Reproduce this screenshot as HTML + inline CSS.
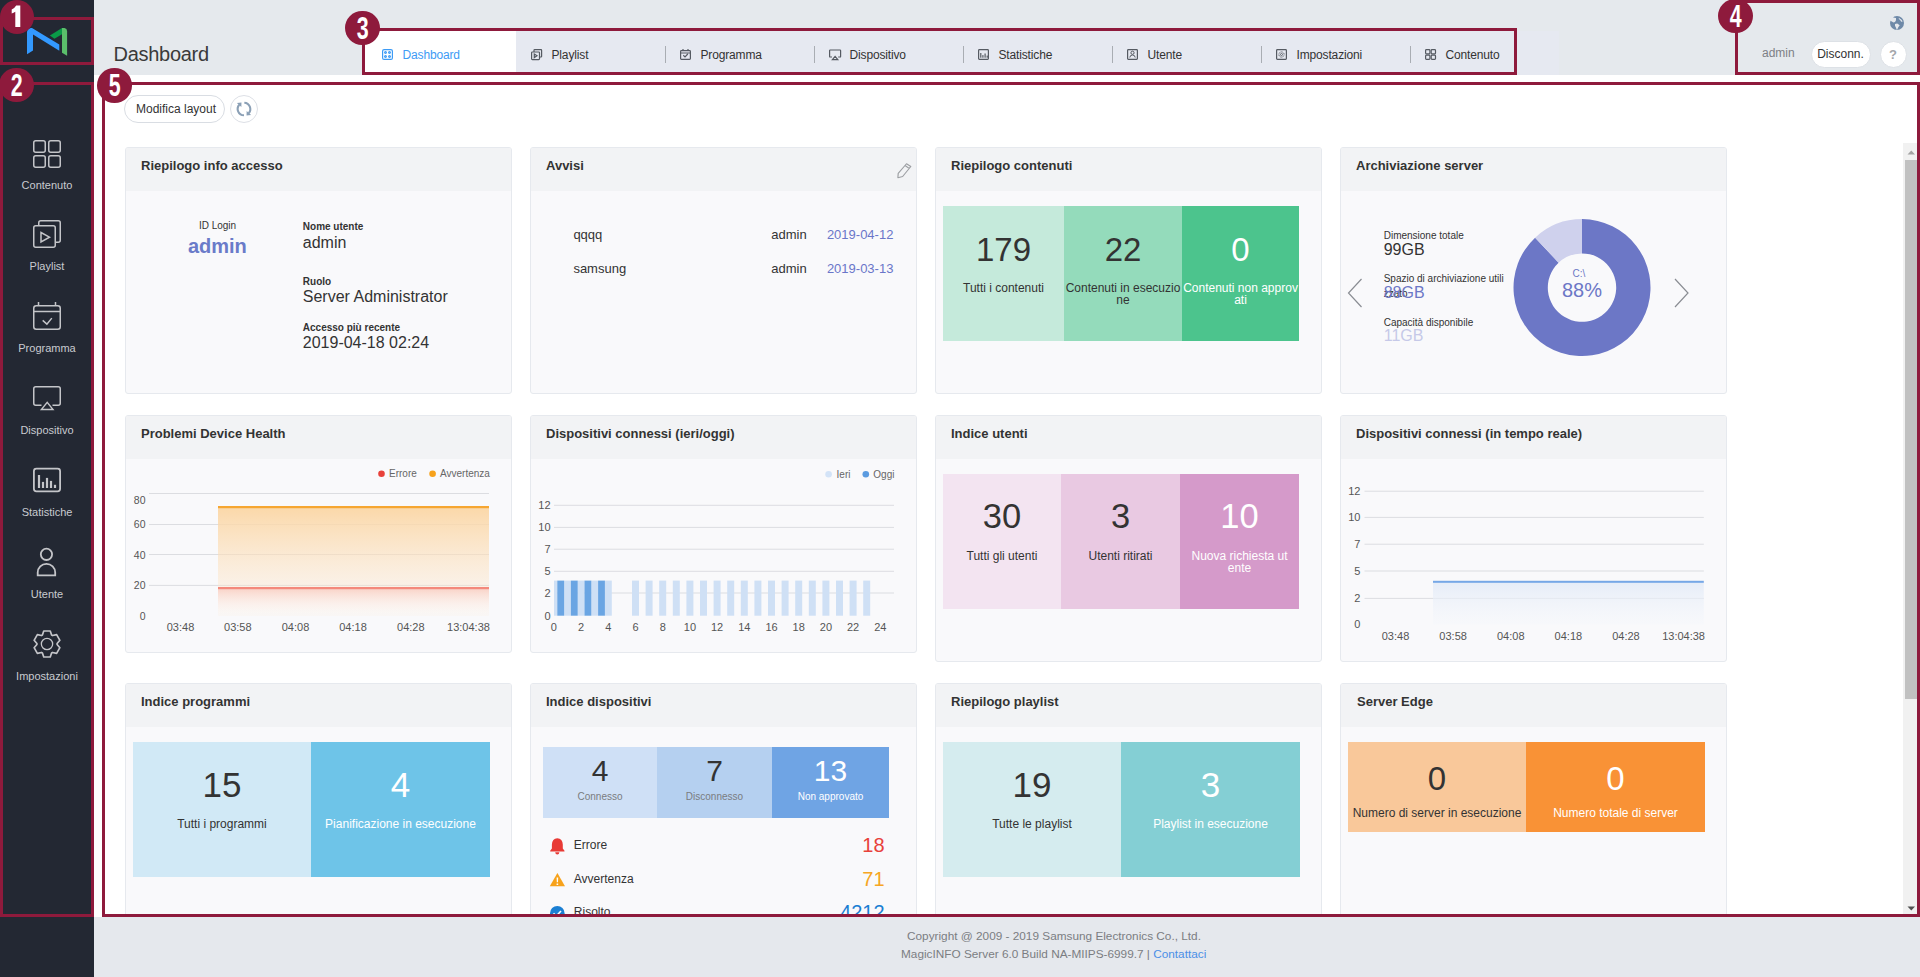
<!DOCTYPE html>
<html><head><meta charset="utf-8">
<style>
*{box-sizing:border-box;margin:0;padding:0}
html,body{width:1920px;height:977px;overflow:hidden;background:#e5e8ed;font-family:"Liberation Sans",sans-serif;color:#333}
.abs{position:absolute}
#side{position:absolute;left:0;top:0;width:94px;height:977px;background:#232833}
#hdr{position:absolute;left:94px;top:0;width:1826px;height:75px;background:#e5e9ed}
#main{position:absolute;left:94px;top:75px;width:1826px;height:842px;background:#fff}
#foot{position:absolute;left:94px;top:917px;width:1826px;height:60px;background:#e5e8ed}
.sitem{position:absolute;left:0;width:94px;height:12px;text-align:center;color:#c9cbd0;font-size:11px;line-height:11px}
.sitem svg{position:absolute;left:33px;top:0}
.sitem span{position:absolute;left:0;width:94px;text-align:center;white-space:nowrap}
.tab{position:absolute;top:31px;height:41px;width:149px;font-size:12px;color:#333}
.tab svg{position:absolute;left:15px;top:18px}
.tab span{position:absolute;left:35px;top:18px;line-height:12px;letter-spacing:-0.15px;white-space:nowrap}
.sep{position:absolute;top:46px;width:1px;height:17px;background:#a9adb3}
.card{position:absolute;width:387px;background:#f9f9fb;border:1px solid #e6e9ee;border-radius:3px;overflow:hidden}
.card .ch{position:absolute;left:0;top:0;width:100%;height:43px;background:#f2f3f5}
.card .ct{position:absolute;left:15px;top:10px;font-size:13px;font-weight:bold;color:#333;white-space:nowrap}
.ann{position:absolute;border:3px solid #8e1a3c}
.num{position:absolute;width:34.5px;height:34.5px;border-radius:50%;background:#8e1a3c;color:#fff;font-weight:bold;font-size:31px;text-align:center;line-height:35.5px}
.num b{display:inline-block;transform:scaleX(0.69)}
.tile{position:absolute;text-align:center}
.tile .n{position:absolute;left:0;width:100%;font-size:32px}
.tile .l{position:absolute;left:0;width:100%;font-size:12px;line-height:12px;word-break:break-all}
</style></head>
<body>
<div id="side">
<svg class="abs" style="left:0;top:0" width="94" height="977" viewBox="0 0 94 977">
<g>
<path d="M27 54.2 V32.8 C27 29.8 29.2 28 32 28 L59.3 44.6 V50.7 L33 34.6 V50.5 Z" fill="#3399ff"/>
<path d="M49.9 35.6 L62 28 V34.3 L54.4 38.8 Z" fill="#0a9a48"/>
<path d="M62 28 H64.5 Q67.1 28.5 67.1 31 V55.8 L62 52.8 Z" fill="#5bbf6b"/>
</g>
<g fill="none" stroke="#c4c5c9" stroke-width="1.5">
<rect x="33.75" y="140.75" width="11.5" height="11.5" rx="2"/>
<rect x="48.75" y="140.75" width="11.5" height="11.5" rx="2"/>
<rect x="33.75" y="155.75" width="11.5" height="11.5" rx="2"/>
<rect x="48.75" y="155.75" width="11.5" height="11.5" rx="2"/>
<path d="M38.75 225.3 V222.75 Q38.75 220.75 40.75 220.75 H58.25 Q60.25 220.75 60.25 222.75 V240.25 Q60.25 242.25 58.25 242.25 H55.8"/>
<rect x="33.75" y="225.75" width="21.5" height="21.5" rx="2"/>
<path d="M41 232.5 L49.5 237.2 L41 242 Z"/>
<rect x="33.75" y="305.75" width="26.5" height="23.5" rx="2.5"/>
<path d="M33.75 311.5 H60.25 M38.5 302 V306 M55.5 302 V306"/>
<path d="M42.7 320.4 L46.9 324.1 L51.8 318.1"/>
<path d="M41.5 405.25 H35.75 Q33.75 405.25 33.75 403.25 V388.75 Q33.75 386.75 35.75 386.75 H58.25 Q60.25 386.75 60.25 388.75 V403.25 Q60.25 405.25 58.25 405.25 H52.5"/>
<path d="M41.5 409.4 L47.2 402.4 L52.9 409.4 Z"/>
<rect x="33.9" y="468.7" width="26.2" height="22.6" rx="2.5" stroke-width="1.8"/>
<circle cx="46.45" cy="554.35" r="5.65" stroke-width="1.8"/>
<path d="M37.7 575.3 V572.55 A8.75 8.75 0 0 1 55.2 572.55 V575.3 Z" stroke-width="1.8"/>
<path d="M42.41 635.00 L43.76 631.00 L50.24 631.00 L51.59 635.00 L52.50 635.53 L56.64 634.69 L59.88 640.31 L57.09 643.47 L57.09 644.53 L59.88 647.69 L56.64 653.31 L52.50 652.47 L51.59 653.00 L50.24 657.00 L43.76 657.00 L42.41 653.00 L41.50 652.47 L37.36 653.31 L34.12 647.69 L36.91 644.53 L36.91 643.47 L34.12 640.31 L37.36 634.69 L41.50 635.53 Z" stroke-width="1.7" stroke-linejoin="round"/>
<circle cx="47" cy="644" r="5.65" stroke-width="1.3"/>
</g>
<g fill="#c4c5c9">
<rect x="37.9" y="475" width="2.2" height="13"/>
<rect x="41.9" y="481.9" width="2.2" height="6.1"/>
<rect x="45.9" y="477.9" width="2.2" height="10.1"/>
<rect x="49.9" y="480.9" width="2.2" height="7.1"/>
<rect x="53.9" y="484.8" width="2.2" height="3.2"/>
</g>
</svg>
<div class="sitem" style="top:179.5px"><span>Contenuto</span></div>
<div class="sitem" style="top:261.3px"><span>Playlist</span></div>
<div class="sitem" style="top:343.3px"><span>Programma</span></div>
<div class="sitem" style="top:425.2px"><span>Dispositivo</span></div>
<div class="sitem" style="top:507.2px"><span>Statistiche</span></div>
<div class="sitem" style="top:589.1px"><span>Utente</span></div>
<div class="sitem" style="top:671.0px"><span>Impostazioni</span></div>
</div>
<div id="hdr"></div>
<div class="abs" style="left:113.6px;top:43.6px;font-size:20px;line-height:20px;letter-spacing:-0.3px;color:#3a3a3a;white-space:nowrap">Dashboard</div>
<div class="abs" style="left:365px;top:31px;width:1194px;height:44px;background:#e6e9f1"></div>
<div class="abs" style="left:365px;top:31px;width:151px;height:41px;background:#fff"></div>
<svg class="abs" style="left:360px;top:40px" width="1160" height="30" viewBox="360 40 1160 30">
<g fill="none" stroke-width="1.2">
<rect x="382.6" y="49.6" width="9.8" height="9.8" rx="1.5" stroke="#3d9bf5"/>
<circle cx="385.5" cy="52.5" r="0.9" stroke="#3d9bf5"/>
<circle cx="389.5" cy="52.5" r="0.9" stroke="#3d9bf5"/>
<circle cx="385.5" cy="56.5" r="0.9" stroke="#3d9bf5"/>
<circle cx="389.5" cy="56.5" r="0.9" stroke="#3d9bf5"/>
<g stroke="#555a62">
<path d="M534 52 V50.3 Q534 49.6 534.7 49.6 H541 Q541.6 49.6 541.6 50.3 V56.5 Q541.6 57 541 57 H539.5"/>
<rect x="531.6" y="52" width="7.9" height="7.6" rx="0.8"/>
<path d="M534.3 54 L537 55.8 L534.3 57.6 Z"/>
<rect x="680.6" y="50.6" width="9.8" height="8.8" rx="0.8"/>
<path d="M680.6 53 H690.4 M683 49 V51 M688 49 V51 M683.3 55.3 L685 56.9 L687.8 54"/>
<path d="M832 57 H830.2 Q829.6 57 829.6 56.4 V50.6 Q829.6 50 830.2 50 H840 Q840.6 50 840.6 50.6 V56.4 Q840.6 57 840 57 H838.2"/>
<path d="M832.4 59.6 L835.1 56.4 L837.8 59.6 Z"/>
<rect x="978.6" y="49.6" width="9.8" height="9.8" rx="0.8"/>
</g><g fill="#555a62" stroke="none"><rect x="980.2" y="53" width="1.2" height="4.7"/><rect x="982.3" y="55.1" width="1.2" height="2.6"/><rect x="984.5" y="53.5" width="1.2" height="4.2"/><rect x="986.6" y="55.6" width="1.2" height="2.1"/></g><g stroke="#555a62">
<rect x="1127.6" y="49.6" width="9.8" height="9.8" rx="0.8"/>
<circle cx="1132.5" cy="52.8" r="1.6" stroke-width="1"/>
<path d="M1129.8 57.5 Q1130 55 1132.5 55 Q1135 55 1135.2 57.5" stroke-width="1"/>
<rect x="1276.6" y="49.6" width="9.8" height="9.8" rx="0.8"/>
<circle cx="1281.5" cy="54.5" r="2.6" stroke-width="1" stroke-dasharray="1 0.6"/>
<circle cx="1281.5" cy="54.5" r="1" stroke-width="0.9"/>
<rect x="1425.6" y="49.6" width="4.3" height="4.3" rx="0.8"/>
<rect x="1431.2" y="49.6" width="4.3" height="4.3" rx="0.8"/>
<rect x="1425.6" y="55.1" width="4.3" height="4.3" rx="0.8"/>
<rect x="1431.2" y="55.1" width="4.3" height="4.3" rx="0.8"/>
</g>
</g>
</svg>
<div class="tab" style="left:367.5px"><span style="color:#3d9bf5">Dashboard</span></div>
<div class="tab" style="left:516.5px"><span>Playlist</span></div>
<div class="sep" style="left:665px"></div>
<div class="tab" style="left:665.5px"><span>Programma</span></div>
<div class="sep" style="left:814px"></div>
<div class="tab" style="left:814.5px"><span>Dispositivo</span></div>
<div class="sep" style="left:963px"></div>
<div class="tab" style="left:963.5px"><span>Statistiche</span></div>
<div class="sep" style="left:1112px"></div>
<div class="tab" style="left:1112.5px"><span>Utente</span></div>
<div class="sep" style="left:1261px"></div>
<div class="tab" style="left:1261.5px"><span>Impostazioni</span></div>
<div class="sep" style="left:1410px"></div>
<div class="tab" style="left:1410.5px"><span>Contenuto</span></div>
<svg class="abs" style="left:1888px;top:14px" width="18" height="18" viewBox="1888 14 18 18">
<circle cx="1897" cy="23" r="7" fill="#6e89a8"/>
<path d="M1889.6 20.2 L1893.5 22.4 L1895 22.1 L1896 20.3 L1896 18.1 L1893.2 17.5 L1893.4 16.3 L1890 17 Z" fill="#e5e8ed"/>
<path d="M1899 18.1 L1901.5 19.7 L1902.7 21.5 L1901.2 21.8 L1900.3 20.3 L1898.7 18.7 Z" fill="#e5e8ed"/>
<path d="M1895 24 L1897.2 23.4 L1899.7 25.2 L1898.4 27 L1896.9 30.2 L1896 27.7 L1895 25.8 Z" fill="#e5e8ed"/>
</svg>
<div class="abs" style="left:1762px;top:46.5px;font-size:12px;line-height:12px;color:#7d7f85">admin</div>
<div class="abs" style="left:1810.5px;top:40.5px;width:60px;height:27px;border-radius:13.5px;background:#fff;border:1px solid #dde1e6;font-size:12px;line-height:25px;text-align:center;color:#333">Disconn.</div>
<div class="abs" style="left:1879.5px;top:40.5px;width:27px;height:27px;border-radius:13.5px;background:#fff;border:1px solid #dde1e6;font-size:13px;font-weight:bold;line-height:25px;text-align:center;color:#a3a6ab">?</div>
<div id="main"></div>
<div class="abs" style="left:124px;top:95px;width:101px;height:28px;border-radius:14px;border:1px solid #d9dde3;background:#fff;font-size:12px;line-height:26px;color:#333;padding-left:11px;white-space:nowrap">Modifica layout</div>
<div class="abs" style="left:230px;top:95px;width:28px;height:28px;border-radius:14px;border:1px solid #dde0e6;background:#fff"></div>
<svg class="abs" style="left:230px;top:95px" width="28" height="28" viewBox="230 95 28 28">
<g fill="none" stroke="#8ba0b6" stroke-width="2.1">
<path d="M244.00 115.30 A6.3 6.3 0 0 1 239.32 104.78"/>
<path d="M244.33 102.71 A6.3 6.3 0 0 1 248.68 113.22"/>
</g>
<path d="M241.46 102.41 L236.89 103.00 L241.35 107.01 Z M246.54 115.59 L251.11 115.00 L246.65 110.99 Z" fill="#8ba0b6"/>
</svg>
<div class="abs" id="clip" style="left:94px;top:143px;width:1809px;height:774px;overflow:hidden"><div class="abs" style="left:-94px;top:-143px;width:1920px;height:977px">
<div class="card" style="left:125px;top:147px;height:247px"><div class="ch"></div><div class="ct" style="left:15px">Riepilogo info accesso</div></div>
<div class="card" style="left:530px;top:147px;height:247px"><div class="ch"></div><div class="ct" style="left:15px">Avvisi</div></div>
<div class="card" style="left:935px;top:147px;height:247px"><div class="ch"></div><div class="ct" style="left:15px">Riepilogo contenuti</div></div>
<div class="card" style="left:1340px;top:147px;height:247px"><div class="ch"></div><div class="ct" style="left:15px">Archiviazione server</div></div>
<div class="card" style="left:125px;top:415px;height:238px"><div class="ch"></div><div class="ct" style="left:15px">Problemi Device Health</div></div>
<div class="card" style="left:530px;top:415px;height:238px"><div class="ch"></div><div class="ct" style="left:15px">Dispositivi connessi (ieri/oggi)</div></div>
<div class="card" style="left:935px;top:415px;height:247px"><div class="ch"></div><div class="ct" style="left:15px">Indice utenti</div></div>
<div class="card" style="left:1340px;top:415px;height:247px"><div class="ch"></div><div class="ct" style="left:15px">Dispositivi connessi (in tempo reale)</div></div>
<div class="card" style="left:125px;top:683px;height:300px"><div class="ch"></div><div class="ct" style="left:15px">Indice programmi</div></div>
<div class="card" style="left:530px;top:683px;height:300px"><div class="ch"></div><div class="ct" style="left:15px">Indice dispositivi</div></div>
<div class="card" style="left:935px;top:683px;height:300px"><div class="ch"></div><div class="ct" style="left:15px">Riepilogo playlist</div></div>
<div class="card" style="left:1340px;top:683px;height:300px"><div class="ch"></div><div class="ct" style="left:16px">Server Edge</div></div>
<div class="abs" style="left:117.5px;width:200px;text-align:center;top:220.7px;font-size:10px;line-height:10px;color:#333;white-space:nowrap;">ID Login</div>
<div class="abs" style="left:117.4px;width:200px;text-align:center;top:236.0px;font-size:20px;line-height:20px;color:#6a7bc9;font-weight:bold;white-space:nowrap;">admin</div>
<div class="abs" style="left:302.8px;top:222.0px;font-size:10px;line-height:10px;color:#333;font-weight:bold;white-space:nowrap;">Nome utente</div>
<div class="abs" style="left:302.8px;top:235.3px;font-size:16px;line-height:16px;color:#333;white-space:nowrap;">admin</div>
<div class="abs" style="left:302.8px;top:276.8px;font-size:10px;line-height:10px;color:#333;font-weight:bold;white-space:nowrap;">Ruolo</div>
<div class="abs" style="left:302.8px;top:289.4px;font-size:16px;line-height:16px;color:#333;white-space:nowrap;">Server Administrator</div>
<div class="abs" style="left:302.8px;top:322.8px;font-size:10px;line-height:10px;color:#333;font-weight:bold;white-space:nowrap;">Accesso più recente</div>
<div class="abs" style="left:302.8px;top:335.3px;font-size:16px;line-height:16px;color:#333;white-space:nowrap;">2019-04-18 02:24</div>
<svg class="abs" style="left:890px;top:158px" width="26" height="26" viewBox="890 158 26 26"><path d="M897.9 177.7 L898.2 173.4 L906.5 163.75 L910.8 166.5 L902.65 176.5 Z M905.0 165.6 L909.3 168.4" fill="none" stroke="#9c9ea2" stroke-width="1.15" stroke-linejoin="round"/></svg>
<div class="abs" style="left:573.4px;top:228.3px;font-size:13px;line-height:13px;color:#333;white-space:nowrap;">qqqq</div>
<div class="abs" style="left:771.3px;top:228.3px;font-size:13px;line-height:13px;color:#333;white-space:nowrap;">admin</div>
<div class="abs" style="left:826.9px;top:228.3px;font-size:13px;line-height:13px;color:#6a76c9;white-space:nowrap;">2019-04-12</div>
<div class="abs" style="left:573.4px;top:261.8px;font-size:13px;line-height:13px;color:#333;white-space:nowrap;">samsung</div>
<div class="abs" style="left:771.3px;top:261.8px;font-size:13px;line-height:13px;color:#333;white-space:nowrap;">admin</div>
<div class="abs" style="left:826.9px;top:261.8px;font-size:13px;line-height:13px;color:#6a76c9;white-space:nowrap;">2019-03-13</div>
<div class="abs" style="left:943px;top:206px;width:121px;height:135px;background:#c5eadb;"></div>
<div class="abs" style="left:903.5px;width:200px;text-align:center;top:233.1px;font-size:33px;line-height:33px;color:#333;white-space:nowrap;">179</div>
<div class="abs" style="left:943px;width:121px;text-align:center;top:282.0px;font-size:12px;line-height:12px;color:#333;word-break:break-all;">Tutti i contenuti</div>
<div class="abs" style="left:1064px;top:206px;width:118px;height:135px;background:#94dbbb;"></div>
<div class="abs" style="left:1023.0px;width:200px;text-align:center;top:233.1px;font-size:33px;line-height:33px;color:#333;white-space:nowrap;">22</div>
<div class="abs" style="left:1064px;width:118px;text-align:center;top:282.0px;font-size:12px;line-height:12px;color:#333;word-break:break-all;">Contenuti in esecuzione</div>
<div class="abs" style="left:1182px;top:206px;width:117px;height:135px;background:#4cc48d;"></div>
<div class="abs" style="left:1140.5px;width:200px;text-align:center;top:233.1px;font-size:33px;line-height:33px;color:#fff;white-space:nowrap;">0</div>
<div class="abs" style="left:1182px;width:117px;text-align:center;top:282.0px;font-size:12px;line-height:12px;color:#fff;word-break:break-all;">Contenuti non approvati</div>
<svg class="abs" style="left:1340px;top:200px" width="387" height="180" viewBox="1340 200 387 180"><path d="M1582.00 219.10 A68.5 68.5 0 1 1 1535.11 237.67 L1558.59 262.67 A34.2 34.2 0 1 0 1582.00 253.40 Z" fill="#6c77c6"/><path d="M1535.11 237.67 A68.5 68.5 0 0 1 1582.00 219.10 L1582.00 253.40 A34.2 34.2 0 0 0 1558.59 262.67 Z" fill="#cfd1ed"/><path d="M1361.5 279 L1348.5 293 L1361.5 307 M1675 279 L1688 293 L1675 307" fill="none" stroke="#8a8d93" stroke-width="1.2"/></svg>
<div class="abs" style="left:1383.7px;top:231.2px;font-size:10px;line-height:10px;color:#333;white-space:nowrap;">Dimensione totale</div>
<div class="abs" style="left:1383.7px;top:241.9px;font-size:16px;line-height:16px;color:#333;white-space:nowrap;">99GB</div>
<div class="abs" style="left:1383.7px;top:271px;width:122px;font-size:10px;line-height:15px;color:#333;word-break:break-all">Spazio di archiviazione utilizzato</div>
<div class="abs" style="left:1383.7px;top:285px;font-size:16px;line-height:16px;color:#6c77c6;white-space:nowrap;">88GB</div>
<div class="abs" style="left:1383.7px;top:318.2px;font-size:10px;line-height:10px;color:#333;white-space:nowrap;">Capacità disponibile</div>
<div class="abs" style="left:1383.7px;top:328px;font-size:16px;line-height:16px;color:#c6c9e8;white-space:nowrap;">11GB</div>
<div class="abs" style="left:1559.0px;width:40px;text-align:center;top:268.5px;font-size:10px;line-height:10px;color:#6c77c6;white-space:nowrap;">C:\</div>
<div class="abs" style="left:1542.0px;width:80px;text-align:center;top:279.5px;font-size:20px;line-height:20px;color:#6c77c6;white-space:nowrap;">88%</div>
<svg class="abs" style="left:125px;top:459px" width="387" height="193" viewBox="125 459 387 193" font-family="Liberation Sans, sans-serif"><defs><linearGradient id="go" x1="0" y1="0" x2="0" y2="1"><stop offset="0" stop-color="#fbd6a4" stop-opacity="0.95"/><stop offset="1" stop-color="#fde9d2" stop-opacity="0.15"/></linearGradient><linearGradient id="gr" x1="0" y1="0" x2="0" y2="1"><stop offset="0" stop-color="#f9c9bd" stop-opacity="0.8"/><stop offset="1" stop-color="#fff" stop-opacity="0"/></linearGradient><linearGradient id="gb" x1="0" y1="0" x2="0" y2="1"><stop offset="0" stop-color="#e2eaf7" stop-opacity="0.85"/><stop offset="1" stop-color="#f3f6fb" stop-opacity="0.3"/></linearGradient></defs><rect x="149" y="493.0" width="340" height="1" fill="#dcdde1"/><rect x="149" y="524.0" width="340" height="1" fill="#dcdde1"/><rect x="149" y="554.0" width="340" height="1" fill="#dcdde1"/><rect x="149" y="584.9" width="340" height="1" fill="#dcdde1"/><rect x="218" y="507" width="271" height="109" fill="url(#go)"/><rect x="218" y="588" width="271" height="28" fill="url(#gr)"/><rect x="218" y="506" width="271" height="2.2" fill="#f6a631"/><rect x="218" y="587" width="271" height="2.2" fill="#f4897c"/><text x="145.5" y="503.8" font-size="10.5" fill="#555" text-anchor="end" >80</text><text x="145.5" y="528.3" font-size="10.5" fill="#555" text-anchor="end" >60</text><text x="145.5" y="558.8" font-size="10.5" fill="#555" text-anchor="end" >40</text><text x="145.5" y="589.3" font-size="10.5" fill="#555" text-anchor="end" >20</text><text x="145.5" y="620.0" font-size="10.5" fill="#555" text-anchor="end" >0</text><text x="180.5" y="631" font-size="11" fill="#555" text-anchor="middle" >03:48</text><text x="237.8" y="631" font-size="11" fill="#555" text-anchor="middle" >03:58</text><text x="295.5" y="631" font-size="11" fill="#555" text-anchor="middle" >04:08</text><text x="353" y="631" font-size="11" fill="#555" text-anchor="middle" >04:18</text><text x="410.8" y="631" font-size="11" fill="#555" text-anchor="middle" >04:28</text><text x="468.5" y="631" font-size="11" fill="#555" text-anchor="middle" >13:04:38</text><circle cx="381.5" cy="473.7" r="3.3" fill="#e8413a"/><text x="389" y="477.3" font-size="10" fill="#666" text-anchor="start" >Errore</text><circle cx="432.6" cy="473.7" r="3.3" fill="#f7a21b"/><text x="440" y="477.3" font-size="10" fill="#666" text-anchor="start" >Avvertenza</text></svg>
<svg class="abs" style="left:530px;top:459px" width="387" height="193" viewBox="530 459 387 193" font-family="Liberation Sans, sans-serif"><rect x="554" y="504.8" width="340" height="1" fill="#dcdde1"/><rect x="554" y="526.9" width="340" height="1" fill="#dcdde1"/><rect x="554" y="548.7" width="340" height="1" fill="#dcdde1"/><rect x="554" y="570.8" width="340" height="1" fill="#dcdde1"/><rect x="554" y="592.5" width="340" height="1" fill="#dcdde1"/><rect x="554.00" y="580.6" width="3.40" height="35.1" fill="#cfe0f5"/><rect x="564.00" y="580.6" width="7.00" height="35.1" fill="#cfe0f5"/><rect x="577.60" y="580.6" width="7.00" height="35.1" fill="#cfe0f5"/><rect x="591.20" y="580.6" width="7.00" height="35.1" fill="#cfe0f5"/><rect x="604.80" y="580.6" width="7.00" height="35.1" fill="#cfe0f5"/><rect x="632.00" y="580.6" width="7.00" height="35.1" fill="#cfe0f5"/><rect x="645.60" y="580.6" width="7.00" height="35.1" fill="#cfe0f5"/><rect x="659.20" y="580.6" width="7.00" height="35.1" fill="#cfe0f5"/><rect x="672.80" y="580.6" width="7.00" height="35.1" fill="#cfe0f5"/><rect x="686.40" y="580.6" width="7.00" height="35.1" fill="#cfe0f5"/><rect x="700.00" y="580.6" width="7.00" height="35.1" fill="#cfe0f5"/><rect x="713.60" y="580.6" width="7.00" height="35.1" fill="#cfe0f5"/><rect x="727.20" y="580.6" width="7.00" height="35.1" fill="#cfe0f5"/><rect x="740.80" y="580.6" width="7.00" height="35.1" fill="#cfe0f5"/><rect x="754.40" y="580.6" width="7.00" height="35.1" fill="#cfe0f5"/><rect x="768.00" y="580.6" width="7.00" height="35.1" fill="#cfe0f5"/><rect x="781.60" y="580.6" width="7.00" height="35.1" fill="#cfe0f5"/><rect x="795.20" y="580.6" width="7.00" height="35.1" fill="#cfe0f5"/><rect x="808.80" y="580.6" width="7.00" height="35.1" fill="#cfe0f5"/><rect x="822.40" y="580.6" width="7.00" height="35.1" fill="#cfe0f5"/><rect x="836.00" y="580.6" width="7.00" height="35.1" fill="#cfe0f5"/><rect x="849.60" y="580.6" width="7.00" height="35.1" fill="#cfe0f5"/><rect x="863.20" y="580.6" width="7.00" height="35.1" fill="#cfe0f5"/><rect x="557.30" y="580.6" width="6.8" height="35.1" fill="#6aa5e3"/><rect x="570.90" y="580.6" width="6.8" height="35.1" fill="#6aa5e3"/><rect x="584.50" y="580.6" width="6.8" height="35.1" fill="#6aa5e3"/><rect x="598.10" y="580.6" width="6.8" height="35.1" fill="#6aa5e3"/><text x="550.6" y="509.1" font-size="11" fill="#555" text-anchor="end" >12</text><text x="550.6" y="531.1999999999999" font-size="11" fill="#555" text-anchor="end" >10</text><text x="550.6" y="553.0" font-size="11" fill="#555" text-anchor="end" >7</text><text x="550.6" y="575.0999999999999" font-size="11" fill="#555" text-anchor="end" >5</text><text x="550.6" y="596.8" font-size="11" fill="#555" text-anchor="end" >2</text><text x="550.6" y="619.5" font-size="11" fill="#555" text-anchor="end" >0</text><text x="553.9" y="631" font-size="11" fill="#555" text-anchor="middle" >0</text><text x="581.1" y="631" font-size="11" fill="#555" text-anchor="middle" >2</text><text x="608.3" y="631" font-size="11" fill="#555" text-anchor="middle" >4</text><text x="635.5" y="631" font-size="11" fill="#555" text-anchor="middle" >6</text><text x="662.6999999999999" y="631" font-size="11" fill="#555" text-anchor="middle" >8</text><text x="689.9" y="631" font-size="11" fill="#555" text-anchor="middle" >10</text><text x="717.0999999999999" y="631" font-size="11" fill="#555" text-anchor="middle" >12</text><text x="744.3" y="631" font-size="11" fill="#555" text-anchor="middle" >14</text><text x="771.5" y="631" font-size="11" fill="#555" text-anchor="middle" >16</text><text x="798.6999999999999" y="631" font-size="11" fill="#555" text-anchor="middle" >18</text><text x="825.9" y="631" font-size="11" fill="#555" text-anchor="middle" >20</text><text x="853.0999999999999" y="631" font-size="11" fill="#555" text-anchor="middle" >22</text><text x="880.3" y="631" font-size="11" fill="#555" text-anchor="middle" >24</text><circle cx="828.6" cy="474.2" r="3.3" fill="#d3e3f7"/><text x="836.6" y="477.8" font-size="10" fill="#666" text-anchor="start" >Ieri</text><circle cx="865.8" cy="474.2" r="3.3" fill="#5b9be0"/><text x="873.3" y="477.8" font-size="10" fill="#666" text-anchor="start" >Oggi</text></svg>
<svg class="abs" style="left:1340px;top:459px" width="387" height="202" viewBox="1340 459 387 202" font-family="Liberation Sans, sans-serif"><rect x="1364.5" y="490.7" width="339.3" height="1" fill="#dcdde1"/><rect x="1364.5" y="516.9" width="339.3" height="1" fill="#dcdde1"/><rect x="1364.5" y="543.7" width="339.3" height="1" fill="#dcdde1"/><rect x="1364.5" y="570.5" width="339.3" height="1" fill="#dcdde1"/><rect x="1364.5" y="597.9" width="339.3" height="1" fill="#dcdde1"/><rect x="1433" y="582" width="270.8" height="42.6" fill="url(#gb)"/><rect x="1433" y="580.8" width="270.8" height="2" fill="#76a7e6"/><text x="1360.4" y="495.0" font-size="11" fill="#555" text-anchor="end" >12</text><text x="1360.4" y="521.1999999999999" font-size="11" fill="#555" text-anchor="end" >10</text><text x="1360.4" y="548.0" font-size="11" fill="#555" text-anchor="end" >7</text><text x="1360.4" y="574.8" font-size="11" fill="#555" text-anchor="end" >5</text><text x="1360.4" y="602.1999999999999" font-size="11" fill="#555" text-anchor="end" >2</text><text x="1360.4" y="628.4" font-size="11" fill="#555" text-anchor="end" >0</text><text x="1395.5" y="639.5" font-size="11" fill="#555" text-anchor="middle" >03:48</text><text x="1453.12" y="639.5" font-size="11" fill="#555" text-anchor="middle" >03:58</text><text x="1510.74" y="639.5" font-size="11" fill="#555" text-anchor="middle" >04:08</text><text x="1568.36" y="639.5" font-size="11" fill="#555" text-anchor="middle" >04:18</text><text x="1625.98" y="639.5" font-size="11" fill="#555" text-anchor="middle" >04:28</text><text x="1683.6" y="639.5" font-size="11" fill="#555" text-anchor="middle" >13:04:38</text></svg>
<div class="abs" style="left:943px;top:474px;width:118px;height:135px;background:#f3e4f1;"></div>
<div class="abs" style="left:902.0px;width:200px;text-align:center;top:499.3px;font-size:34.5px;line-height:34.5px;color:#333;white-space:nowrap;">30</div>
<div class="abs" style="left:943px;width:118px;text-align:center;top:550.0px;font-size:12px;line-height:12px;color:#333;word-break:break-all;">Tutti gli utenti</div>
<div class="abs" style="left:1061px;top:474px;width:119px;height:135px;background:#e9c9e2;"></div>
<div class="abs" style="left:1020.5px;width:200px;text-align:center;top:499.3px;font-size:34.5px;line-height:34.5px;color:#333;white-space:nowrap;">3</div>
<div class="abs" style="left:1061px;width:119px;text-align:center;top:550.0px;font-size:12px;line-height:12px;color:#333;word-break:break-all;">Utenti ritirati</div>
<div class="abs" style="left:1180px;top:474px;width:119px;height:135px;background:#d59aca;"></div>
<div class="abs" style="left:1139.5px;width:200px;text-align:center;top:499.3px;font-size:34.5px;line-height:34.5px;color:#fff;white-space:nowrap;">10</div>
<div class="abs" style="left:1180px;width:119px;text-align:center;top:550.0px;font-size:12px;line-height:12px;color:#fff;word-break:break-all;">Nuova richiesta ut<br>ente</div>
<div class="abs" style="left:133px;top:742px;width:178px;height:135px;background:#d1e9f6;"></div>
<div class="abs" style="left:122.0px;width:200px;text-align:center;top:767.4px;font-size:35px;line-height:35px;color:#333;white-space:nowrap;">15</div>
<div class="abs" style="left:133px;width:178px;text-align:center;top:817.6px;font-size:12px;line-height:12px;color:#333;word-break:break-all;">Tutti i programmi</div>
<div class="abs" style="left:311px;top:742px;width:179px;height:135px;background:#6ec4e8;"></div>
<div class="abs" style="left:300.5px;width:200px;text-align:center;top:767.4px;font-size:35px;line-height:35px;color:#fff;white-space:nowrap;">4</div>
<div class="abs" style="left:311px;width:179px;text-align:center;top:817.6px;font-size:12px;line-height:12px;color:#fff;word-break:break-all;">Pianificazione in esecuzione</div>
<div class="abs" style="left:543px;top:747px;width:114px;height:70.5px;background:#cfe0f6;"></div>
<div class="abs" style="left:500.0px;width:200px;text-align:center;top:755.6px;font-size:30px;line-height:30px;color:#333;white-space:nowrap;">4</div>
<div class="abs" style="left:543px;width:114px;text-align:center;top:791.5px;font-size:10px;line-height:10px;color:#7a7c80;word-break:break-all;">Connesso</div>
<div class="abs" style="left:657px;top:747px;width:115px;height:70.5px;background:#b5d0f0;"></div>
<div class="abs" style="left:614.5px;width:200px;text-align:center;top:755.6px;font-size:30px;line-height:30px;color:#333;white-space:nowrap;">7</div>
<div class="abs" style="left:657px;width:115px;text-align:center;top:791.5px;font-size:10px;line-height:10px;color:#7a7c80;word-break:break-all;">Disconnesso</div>
<div class="abs" style="left:772px;top:747px;width:117px;height:70.5px;background:#6fa4e4;"></div>
<div class="abs" style="left:730.5px;width:200px;text-align:center;top:755.6px;font-size:30px;line-height:30px;color:#fff;white-space:nowrap;">13</div>
<div class="abs" style="left:772px;width:117px;text-align:center;top:791.5px;font-size:10px;line-height:10px;color:#fff;word-break:break-all;">Non approvato</div>
<div class="abs" style="left:943px;top:742px;width:178px;height:135px;background:#d5ecef;"></div>
<div class="abs" style="left:932.0px;width:200px;text-align:center;top:767.4px;font-size:35px;line-height:35px;color:#333;white-space:nowrap;">19</div>
<div class="abs" style="left:943px;width:178px;text-align:center;top:817.6px;font-size:12px;line-height:12px;color:#333;word-break:break-all;">Tutte le playlist</div>
<div class="abs" style="left:1121px;top:742px;width:179px;height:135px;background:#84cfd4;"></div>
<div class="abs" style="left:1110.5px;width:200px;text-align:center;top:767.4px;font-size:35px;line-height:35px;color:#fff;white-space:nowrap;">3</div>
<div class="abs" style="left:1121px;width:179px;text-align:center;top:817.6px;font-size:12px;line-height:12px;color:#fff;word-break:break-all;">Playlist in esecuzione</div>
<div class="abs" style="left:1348px;top:742px;width:178px;height:89.5px;background:#f9c89a;"></div>
<div class="abs" style="left:1337.0px;width:200px;text-align:center;top:762.1px;font-size:33px;line-height:33px;color:#333;white-space:nowrap;">0</div>
<div class="abs" style="left:1348px;width:178px;text-align:center;top:806.6px;font-size:12px;line-height:12px;color:#333;word-break:break-all;">Numero di server in esecuzione</div>
<div class="abs" style="left:1526px;top:742px;width:179px;height:89.5px;background:#f99236;"></div>
<div class="abs" style="left:1515.5px;width:200px;text-align:center;top:762.1px;font-size:33px;line-height:33px;color:#fff;white-space:nowrap;">0</div>
<div class="abs" style="left:1526px;width:179px;text-align:center;top:806.6px;font-size:12px;line-height:12px;color:#fff;word-break:break-all;">Numero totale di server</div>
<svg class="abs" style="left:545px;top:830px" width="25" height="90" viewBox="545 830 25 90"><path d="M557.3 838.2 Q562.6 838.6 562.8 844.5 V848.5 L564.5 850.8 V851.5 H550.2 V850.8 L551.9 848.5 V844.5 Q552.1 838.6 557.3 838.2 Z M555.2 852.2 H559.4 Q559.2 854.6 557.3 854.6 Q555.4 854.6 555.2 852.2 Z" fill="#e83a35"/><path d="M557.4 873 L565 886.2 H549.8 Z" fill="#f7a21b"/><path d="M556.6 877.5 H558.2 L558 882.3 H556.8 Z M556.6 883.4 H558.2 V885 H556.6 Z" fill="#fff"/><circle cx="557.3" cy="913.2" r="7.3" fill="#1b7fd3"/><path d="M553.5 913.3 L556.3 916 L561 911" fill="none" stroke="#fff" stroke-width="1.6"/></svg>
<div class="abs" style="left:573.8px;top:838.9px;font-size:12px;line-height:12px;color:#333;white-space:nowrap;">Errore</div>
<div class="abs" style="left:573.8px;top:872.6px;font-size:12px;line-height:12px;color:#333;white-space:nowrap;">Avvertenza</div>
<div class="abs" style="left:573.8px;top:906.3px;font-size:12px;line-height:12px;color:#333;white-space:nowrap;">Risolto</div>
<div class="abs" style="left:784.6px;width:100px;text-align:right;top:834.6px;font-size:20px;line-height:20px;color:#e8413a">18</div>
<div class="abs" style="left:784.6px;width:100px;text-align:right;top:868.7px;font-size:20px;line-height:20px;color:#f6a623">71</div>
<div class="abs" style="left:784.6px;width:100px;text-align:right;top:902.4px;font-size:20px;line-height:20px;color:#1b7fd3">4212</div>

</div></div>
<div class="abs" style="left:1903px;top:143px;width:14px;height:771px;background:#f1f1f1"></div>
<div class="abs" style="left:1905px;top:160px;width:12px;height:539px;background:#c1c1c1"></div>
<svg class="abs" style="left:1903px;top:143px" width="14" height="771" viewBox="0 0 14 771">
<path d="M4.5 11.5 L8.25 7.5 L12 11.5 Z" fill="#a3a3a3"/>
<path d="M4.5 763.5 L8.25 767.5 L12 763.5 Z" fill="#505050"/>
</svg>
<div id="foot"></div>
<div class="abs" style="left:907px;top:931px;font-size:11.8px;line-height:11.8px;color:#7b7d82;white-space:nowrap">Copyright @ 2009 - 2019 Samsung Electronics Co., Ltd.</div>
<div class="abs" style="left:901px;top:949px;font-size:11.8px;line-height:11.8px;color:#7b7d82;white-space:nowrap">MagicINFO Server 6.0 Build NA-MIIPS-6999.7 | <span style="color:#4a8fe7">Contattaci</span></div>
<div class="ann" style="left:0;top:17px;width:94px;height:48px"></div>
<div class="ann" style="left:0;top:82px;width:94px;height:835px"></div>
<div class="ann" style="left:362px;top:28px;width:155px;height:47px;width:1155px"></div>
<div class="ann" style="left:1735px;top:0;width:185px;height:75px"></div>
<div class="ann" style="left:102px;top:82px;width:1818px;height:835px"></div>
<div class="num" style="left:-0.25px;top:-0.25px"></div><svg class="abs" style="left:0;top:0" width="34" height="34" viewBox="0 0 34 34"><path d="M15.3 27 V11.8 Q13.6 13.1 11.7 13.6 V9.6 Q14.6 8.4 16.2 5.6 H20.3 V27 Z" fill="#fff"/></svg>
<div class="num" style="left:-0.65px;top:67.55px"><b>2</b></div>
<div class="num" style="left:345.25px;top:10.75px"><b>3</b></div>
<div class="num" style="left:1718.25px;top:-1.25px"><b>4</b></div>
<div class="num" style="left:97.35px;top:68.05px"><b>5</b></div>
</body></html>
